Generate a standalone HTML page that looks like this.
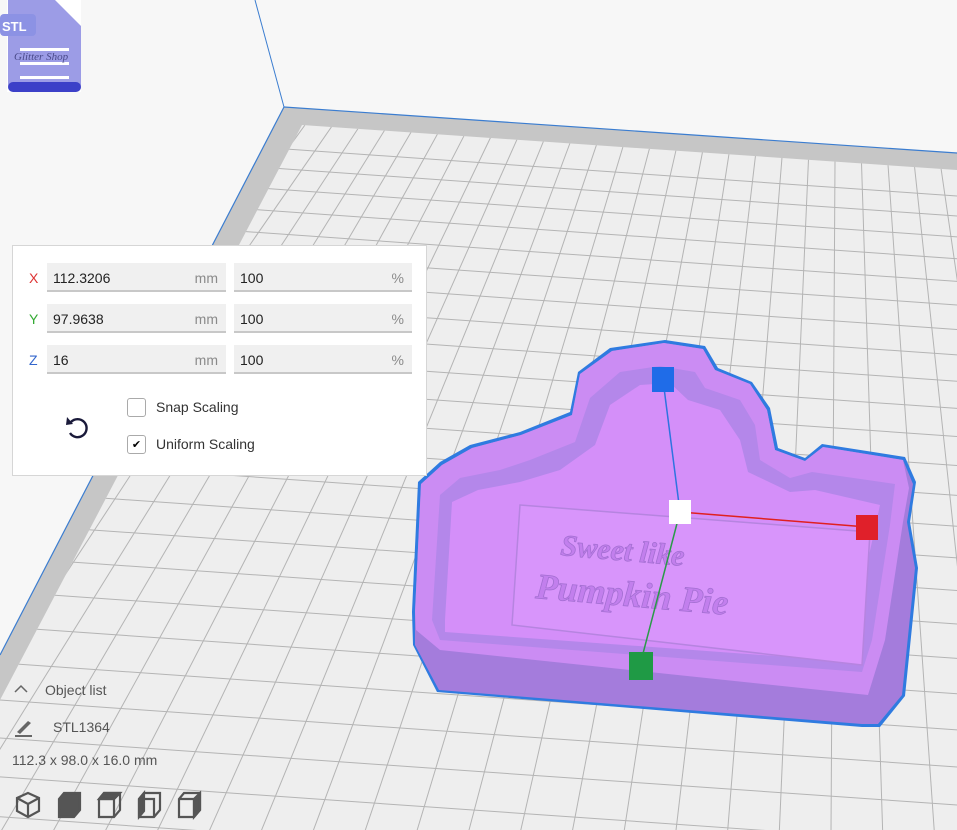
<!DOCTYPE html>
<html><head><meta charset="utf-8"><style>
html,body{margin:0;width:957px;height:830px;overflow:hidden}
body{background:#f7f7f7;font-family:"Liberation Sans",sans-serif;position:relative}
svg.bg{position:absolute;left:0;top:0}
.panel{position:absolute;left:12px;top:245px;width:415px;height:231px;background:#fff;border:1px solid #d6d6d6;box-sizing:border-box}
.lab{position:absolute;left:16px;font-size:14px}
.f{position:absolute;height:29px;background:#f0f0f0;border-bottom:2px solid #c8c8c8;font-size:14px;color:#222;line-height:30px;box-sizing:border-box;padding-left:6px}
.f span{position:absolute;right:8px;top:0;color:#8a8a8a}
.cb{position:absolute;left:114px;width:19px;height:19px;border:1px solid #aaa;border-radius:3px;box-sizing:border-box;font-size:11px;text-align:center;line-height:18px}
.ct{position:absolute;left:143px;font-size:14px;color:#333}
.bt{position:absolute;font-size:14px;color:#555}
</style></head><body>
<svg class="bg" width="957" height="830" viewBox="0 0 957 830">
<defs><clipPath id="pc"><polygon points="302,125 957,170 957,830 0,830 0,700"/></clipPath></defs>
<line x1="255" y1="0" x2="284" y2="107" stroke="#3b7dd0" stroke-width="1"/>
<polygon points="284,107 957,153 957,830 0,830 0,655" fill="#c6c6c6"/>
<polygon points="302,125 957,170 957,830 0,830 0,700" fill="#eeeeee"/>
<line x1="284" y1="107" x2="957" y2="153" stroke="#3b7dd0" stroke-width="1.2"/>
<line x1="284" y1="107" x2="0" y2="655" stroke="#3b7dd0" stroke-width="1.2"/>
<g stroke="#b4b4b4" stroke-width="1" id="grid" clip-path="url(#pc)"></g>
</svg>
<svg class="bg" width="957" height="830" viewBox="0 0 957 830">
<path d="M412,612 L418,482 L440,462 L470,445 L520,432 L570,412 L578,372 L610,348 L665,340 L705,346 L718,368 L752,382 L770,408 L778,448 L805,458 L822,444 L905,457 L916,482 L910,522 L918,568 L905,696 L880,727 L862,727 L437,692 L413,645 Z" fill="#2f7be0"/>
<path d="M415,612 L421,484 L442,465 L472,448 L521,435 L572,415 L580,374 L612,351 L664,343 L703,349 L715,370 L750,384 L767,410 L775,450 L805,461 L823,447 L903,460 L913,484 L907,522 L915,568 L902,695 L878,724 L862,724 L439,690 L415,645 Z" fill="#a47cdc"/>
<path d="M415,612 L421,484 L442,465 L472,448 L521,435 L572,415 L580,374 L612,351 L664,343 L703,349 L715,370 L750,384 L767,410 L775,450 L805,461 L823,447 L903,460 L909,488 L903,522 L885,640 L868,695 L440,650 L416,630 Z" fill="#cb8cf3"/>
<path d="M432,620 L440,495 L460,478 L500,470 L530,460 L575,442 L590,398 L620,372 L660,366 L695,372 L705,388 L740,400 L755,425 L760,460 L790,478 L812,472 L895,484 L890,525 L872,640 L862,672 L440,640 Z" fill="#b487ea"/>
<path d="M445,620 L452,502 L478,490 L520,482 L560,470 L595,445 L610,405 L640,385 L670,383 L688,400 L720,410 L740,440 L748,472 L790,492 L815,490 L880,505 L868,560 L858,662 L445,632 Z" fill="#d48ff9"/>
<path d="M520,505 L870,532 L862,665 L512,625 Z" fill="#d895fb" stroke="#b684e0" stroke-width="1.5"/>
<text x="560" y="555" font-family="Liberation Serif" font-style="italic" font-weight="bold" font-size="30" fill="#c27fed" stroke="#a46fd2" stroke-width=".8" transform="rotate(5 560 555)">Sweet like</text>
<text x="535" y="598" font-family="Liberation Serif" font-style="italic" font-weight="bold" font-size="36" fill="#c27fed" stroke="#a46fd2" stroke-width=".8" transform="rotate(5 535 598)">Pumpkin Pie</text>
<line x1="663" y1="380" x2="680" y2="512" stroke="#2e74e0" stroke-width="1.5"/>
<line x1="680" y1="512" x2="640" y2="665" stroke="#2a9a48" stroke-width="1.5"/>
<line x1="680" y1="512" x2="867" y2="527" stroke="#e02020" stroke-width="1.5"/>
<rect x="652" y="367" width="22" height="25" fill="#1f6ce8"/>
<rect x="669" y="500" width="22" height="24" fill="#fff"/>
<rect x="856" y="515" width="22" height="25" fill="#e0202a"/>
<rect x="629" y="652" width="24" height="28" fill="#1f9a45"/>
<rect x="7" y="0" width="74" height="92" fill="#fff"/>
<path d="M8,0 H55 L81,26 V84 Q81,92 73,92 H16 Q8,92 8,84 Z" fill="#9c9ce6"/>
<rect x="8" y="82" width="73" height="10" rx="5" fill="#3c40c8"/>
<rect x="20" y="48" width="49" height="3" fill="#fff"/><rect x="20" y="62" width="49" height="3" fill="#fff"/><rect x="20" y="76" width="49" height="3" fill="#fff"/>
<rect x="0" y="14" width="36" height="22" rx="4" fill="#8c92e4"/>
<text x="2" y="31" font-size="13" font-weight="bold" fill="#fff">STL</text>
<text x="14" y="60" font-family="Liberation Serif" font-style="italic" font-size="11" fill="#4a4a8a">Glitter Shop</text>
</svg>
<div class="panel">
<div class="lab" style="top:24px;color:#d33">X</div>
<div class="lab" style="top:65px;color:#3a3">Y</div>
<div class="lab" style="top:106px;color:#36c">Z</div>
<div class="f" style="left:34px;top:17px;width:179px">112.3206<span>mm</span></div>
<div class="f" style="left:221px;top:17px;width:178px">100<span>%</span></div>
<div class="f" style="left:34px;top:58px;width:179px">97.9638<span>mm</span></div>
<div class="f" style="left:221px;top:58px;width:178px">100<span>%</span></div>
<div class="f" style="left:34px;top:99px;width:179px">16<span>mm</span></div>
<div class="f" style="left:221px;top:99px;width:178px">100<span>%</span></div>
<div class="cb" style="top:152px"></div><div class="ct" style="top:153px">Snap Scaling</div>
<div class="cb" style="top:189px">✔</div><div class="ct" style="top:190px">Uniform Scaling</div>
<svg style="position:absolute;left:52px;top:167px" width="26" height="28" viewBox="0 0 26 28"><path d="M6,9 A9,9 0 1 1 5,20" fill="none" stroke="#1a1a3a" stroke-width="2.4"/><path d="M2,4 L8,11 L1,12 Z" fill="#1a1a3a"/></svg>
</div>
<svg style="position:absolute;left:14px;top:684px" width="14" height="10"><path d="M1,8 L7,2 L13,8" fill="none" stroke="#666" stroke-width="1.5"/></svg>
<div class="bt" style="left:45px;top:682px">Object list</div>
<svg style="position:absolute;left:14px;top:718px" width="20" height="20"><path d="M3,14 L14,3 L17,5 L6,16 Z" fill="#666"/><rect x="1" y="17" width="17" height="2" fill="#666"/></svg>
<div class="bt" style="left:53px;top:719px">STL1364</div>
<div class="bt" style="left:12px;top:752px">112.3 x 98.0 x 16.0 mm</div>
<svg style="position:absolute;left:14px;top:790px" width="195" height="30" viewBox="0 0 195 30" fill="none" stroke="#555" stroke-width="2.2">
<path d="M14,3 L25,8 V21 L14,27 L3,21 V8 Z M3,8 L14,14 L25,8 M14,14 V27"/>
<g transform="translate(42,0)"><path d="M8,3 H24 V20 L18,27 H3 V9 Z" fill="#555"/></g>
<g transform="translate(82,0)"><path d="M8,3 H24 V20 L18,27 H3 V9 Z M3,9 H18 V27 M18,9 L24,3" /><path d="M8,3 H24 L18,9 H3 Z" fill="#555"/></g>
<g transform="translate(122,0)"><path d="M8,3 H24 V20 L18,27 H3 V9 Z M3,9 H18 V27"/><path d="M3,9 L8,3 V21 L3,27 Z" fill="#555"/></g>
<g transform="translate(162,0)"><path d="M8,3 H24 V20 L18,27 H3 V9 Z M3,9 H18 V27"/><path d="M18,9 L24,3 V20 L18,27 Z" fill="#555"/></g>
</svg>
<script>
var g=document.getElementById('grid'),s='';
function L(a,b,c,d){s+='<line x1="'+a+'" y1="'+b+'" x2="'+c+'" y2="'+d+'"/>';}
for(var i=0;i<27;i++){var tx=305+i*26.5,ty=125+i*1.8;L(tx,ty,-330+i*58,1000);}
var y=130;for(var j=0;j<30;j++){L(-50,y-4.5,957,y+66);y+=20+j*0.9;}
g.innerHTML=s;
</script>
</body></html>
